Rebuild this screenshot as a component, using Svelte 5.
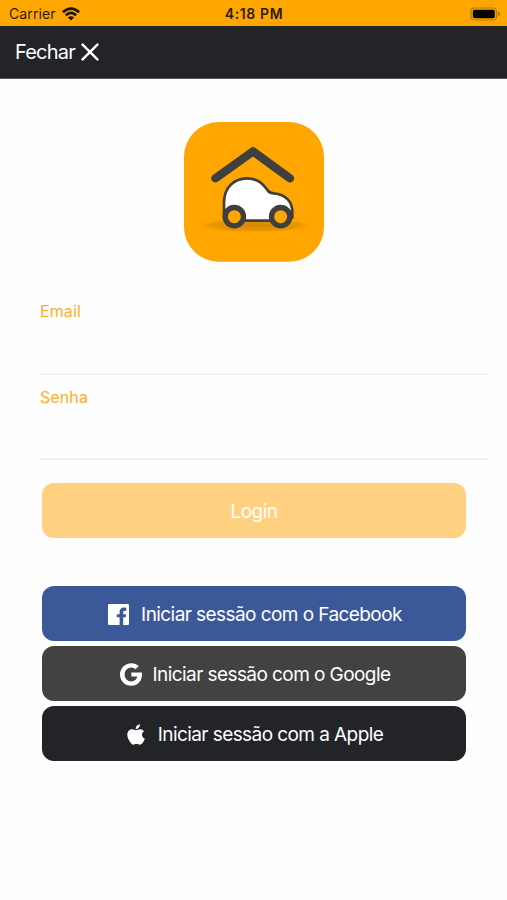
<script>
  let email = $state('');
  let password = $state('');
</script>

<div class="screen">
  <div class="status">
    <div class="carrier">
      <span>Carrier</span>
      <svg width="18" height="14" viewBox="0 0 18 14" fill="none" stroke="#1d1303" stroke-width="2.7">
        <path d="M.9 5.2Q9-2 17.1 5.2" />
        <path d="M3.8 8.2Q9 3.6 14.2 8.2" />
        <path d="M9 13.6 5.9 10.4Q9 7.9 12.1 10.4Z" fill="#1d1303" stroke="none" />
      </svg>
    </div>
    <span class="time">4:18 PM</span>
    <svg class="battery" width="31" height="14" viewBox="0 0 31 14">
      <rect x="1" y="1" width="25.5" height="12" rx="3.5" fill="none" stroke="#b87808" stroke-width="1.2" />
      <rect x="2.8" y="2.8" width="22" height="8.4" rx="1.8" fill="#080500" />
      <path d="M28 4.6Q30.3 5.2 30.3 7T28 9.4Z" fill="#b87808" />
    </svg>
  </div>

  <header>
    <button class="close">
      <span>Fechar</span>
      <svg width="18" height="18" viewBox="0 0 18 18" fill="none" stroke="#fff" stroke-width="2.5" stroke-linecap="round">
        <path d="m1.6 1.6 14.8 14.8M16.4 1.6 1.6 16.4" />
      </svg>
    </button>
  </header>

  <main>
    <svg class="logo" width="140" height="140" viewBox="30 29 420 420">
      <defs>
        <radialGradient id="shade">
          <stop offset="0" stop-color="#c47c00" stop-opacity=".7" />
          <stop offset=".7" stop-color="#d38700" stop-opacity=".5" />
          <stop offset="1" stop-color="#ffa700" stop-opacity="0" />
        </radialGradient>
      </defs>
      <rect x="30" y="29" width="420" height="419" rx="104" fill="#ffa700" />
      <ellipse cx="245" cy="339" rx="188" ry="23" fill="url(#shade)" />
      <path d="M124 198 237 117 348 198" fill="none" stroke="#3f3f3f" stroke-width="25" stroke-linecap="round" stroke-linejoin="round" />
      <path d="M150 316V270C150 226 180 198 219 198C251 198 267 214 281 234Q287 242 299 243C337 246 355 270 355 298V316L320 325H181Z" fill="#fff" stroke="#3f3f3f" stroke-width="8" stroke-linejoin="round" />
      <circle cx="181" cy="313" r="27.5" fill="#ffa700" stroke="#3f3f3f" stroke-width="16" />
      <circle cx="320" cy="313" r="27.5" fill="#ffa700" stroke="#3f3f3f" stroke-width="16" />
    </svg>

    <label class="field">
      <span>Email</span>
      <input type="email" bind:value={email} />
    </label>
    <label class="field">
      <span>Senha</span>
      <input type="password" bind:value={password} />
    </label>

    <button class="action login"><span>Login</span></button>

    <div class="social">
      <button class="action facebook">
        <svg width="21" height="21" viewBox="0 0 21 21">
          <path fill="#fff" d="M1.2 0H19.8Q21 0 21 1.2V19.8Q21 21 19.8 21H15.2V13.2H17.8L18.2 10.2H15.2V8.3C15.2 7.3 15.6 6.7 16.8 6.7H18.3V3.7C18 3.6 17 3.5 16 3.5C13.4 3.5 11.6 5.1 11.6 7.8V10.2H8.8V13.2H11.6V21H1.2Q0 21 0 19.8V1.2Q0 0 1.2 0Z" />
        </svg>
        <span>Iniciar sessão com o Facebook</span>
      </button>
      <button class="action google">
        <svg width="22" height="23" viewBox="0 0 22 23">
          <path fill="#fff" d="M11.3 9.4H21.8Q22 10.4 22 11.5C22 18.1 17.5 22.8 11.3 22.8C5 22.8 0 17.8 0 11.5S5 .2 11.3 .2C14.3 .2 16.9 1.3 18.8 3.1L15.6 6.3C14.7 5.4 13.2 4.5 11.3 4.5C7.5 4.5 4.6 7.6 4.6 11.5S7.5 18.5 11.3 18.5C14.6 18.5 16.8 16.6 17.3 13.6H11.3Z" />
        </svg>
        <span>Iniciar sessão com o Google</span>
      </button>
      <button class="action apple">
        <svg width="18" height="21" viewBox="0 0 18 21">
          <path fill="#fff" d="M12.9.2C13.1 2.9 11 5 8.7 5.1C8.5 2.6 10.6.4 12.9.2ZM17.1 7.2C15.7 8.1 15 9.3 15 10.8C15 12.6 16 14 17.8 14.7C17.4 16.1 16.5 17.7 15.5 19C14.7 20 13.9 20.7 12.8 20.7C11.6 20.7 11.2 20 9.6 20S7.5 20.7 6.4 20.7C5.2 20.7 4.3 19.7 3.4 18.5C1.6 16 .3 13.4 .3 10.8C.3 7.5 2.5 5.3 5.1 5.3C6.7 5.3 7.8 6.2 9.1 6.2C10.2 6.2 11.5 5.2 13.3 5.2C14.8 5.2 16.2 5.9 17.1 7.2Z" />
        </svg>
        <span>Iniciar sessão com a Apple</span>
      </button>
    </div>
  </main>
</div>

<style>
  :global(body) {
    margin: 0;
    background: #fefefe;
  }
  .screen {
    height: 900px;
    overflow: hidden;
    background: #fefefe;
    font-family: Inter, "Liberation Sans", sans-serif;
  }
  button,
  input {
    font: inherit;
    border: 0;
    margin: 0;
    padding: 0;
    outline: 0;
  }
  svg {
    display: block;
    flex: none;
  }
  .status {
    height: 26px;
    box-sizing: border-box;
    padding: 1px 6px 0 9px;
    display: grid;
    grid-template-columns: 1fr auto 1fr;
    align-items: center;
    background: #ffa700;
    color: #2b1d05;
    font-size: 14px;
  }
  .carrier {
    display: flex;
    align-items: center;
    gap: 6px;
    letter-spacing: 0.1px;
  }
  .time {
    margin-right: 2px;
    font-weight: 600;
    letter-spacing: 0.6px;
  }
  .battery {
    justify-self: end;
  }
  header {
    height: 53px;
    box-sizing: border-box;
    padding-left: 15px;
    display: flex;
    align-items: center;
    background: #222428;
    border-bottom: 1px solid #55575a;
  }
  .close {
    display: flex;
    align-items: center;
    gap: 6px;
    background: none;
    color: #fff;
    font-size: 20px;
    letter-spacing: -0.8px;
  }
  main {
    padding: 43px 19px 0 40px;
    display: flex;
    flex-direction: column;
  }
  .logo {
    margin: 0 0 35px 144px;
  }
  .field {
    height: 85px;
    box-sizing: border-box;
    padding-top: 12px;
    display: flex;
    flex-direction: column;
    border-bottom: 2px solid #f2f2f3;
  }
  .field:first-of-type {
    height: 78px;
    padding-top: 4px;
  }
  .field span {
    align-self: flex-start;
    line-height: 20px;
    font-size: 16px;
    letter-spacing: 0.1px;
    color: #fbb02c;
  }
  .field input {
    height: 40px;
    background: transparent;
  }
  .action {
    width: 424px;
    height: 55px;
    box-sizing: border-box;
    padding-top: 2px;
    border-radius: 12px;
    display: flex;
    align-items: center;
    justify-content: center;
    color: #fff;
    font-size: 19px;
    letter-spacing: -0.57px;
    white-space: nowrap;
  }
  .login {
    margin: 23px 0 0 2px;
    background: #ffd180;
  }
  .social {
    margin: 48px 0 0 2px;
    display: flex;
    flex-direction: column;
    gap: 5px;
  }
  .social .action {
    padding: 2px 0 0 2px;
  }
  .facebook {
    background: #3b5998;
    gap: 12px;
  }
  .google {
    background: #424242;
    gap: 11px;
  }
  .apple {
    background: #222428;
    gap: 13px;
  }
</style>
